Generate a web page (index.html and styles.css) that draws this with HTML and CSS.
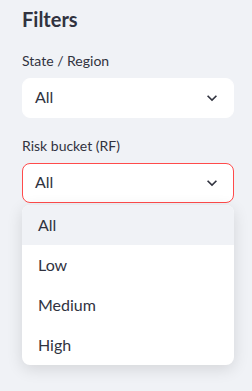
FILE: index.html
```html
<!DOCTYPE html>
<html>
<head>
<meta charset="utf-8">
<link rel="stylesheet" href="styles.css">
</head>
<body>
<aside class="sidebar">
  <h2 class="title">Filters</h2>
  <div class="field">
    <label class="label">State / Region</label>
    <div class="select">
      <span class="value">All</span>
      <svg class="chev" viewBox="0 0 24 24" width="20" height="20"><path d="M7.41 8.59L12 13.17l4.59-4.58L18 10l-6 6-6-6 1.41-1.41z" fill="#31333f"/></svg>
    </div>
  </div>
  <div class="field">
    <label class="label">Risk bucket (RF)</label>
    <div class="select-wrap">
      <div class="select focused">
        <span class="value">All</span>
        <svg class="chev" viewBox="0 0 24 24" width="20" height="20"><path d="M7.41 8.59L12 13.17l4.59-4.58L18 10l-6 6-6-6 1.41-1.41z" fill="#31333f"/></svg>
      </div>
      <ul class="menu">
        <li class="opt active">All</li>
        <li class="opt">Low</li>
        <li class="opt">Medium</li>
        <li class="opt">High</li>
      </ul>
    </div>
  </div>
</aside>
</body>
</html>
```
FILE: styles.css
```css
html, body {
  margin: 0;
  padding: 0;
  background: #f0f2f6;
  height: 100%;
}
body {
  font-family: Lato, "Open Sans", sans-serif;
  color: #31333f;
}
.sidebar {
  width: 212px;
  padding: 7px 18px 0 22px;
  display: flex;
  flex-direction: column;
}
.title {
  margin: 0;
  font-size: 20px;
  line-height: 24px;
  font-weight: 700;
  height: 24px;
}
.field {
  display: flex;
  flex-direction: column;
}
.field:first-of-type {
  margin-top: 19.5px;
}
.field + .field {
  margin-top: 17.5px;
}
.label {
  font-size: 14px;
  line-height: 20px;
  margin-bottom: 7.5px;
}
.select-wrap {
  position: relative;
}
.select {
  box-sizing: border-box;
  height: 40px;
  background: #fff;
  border: 1px solid #fff;
  border-radius: 8px;
  display: flex;
  align-items: center;
  justify-content: space-between;
  padding: 0 11px 0 12px;
}
.select.focused {
  border-color: #ff4b4b;
}
.value {
  font-size: 16px;
  line-height: 20px;
  margin-top: -2px;
}
.chev {
  display: block;
}
.menu {
  position: absolute;
  left: 0;
  right: 0;
  top: 42px;
  margin: 0;
  padding: 0;
  list-style: none;
  background: #fff;
  border-radius: 8px;
  overflow: hidden;
  box-shadow: 0 4px 16px rgba(0, 0, 0, 0.12);
}
.opt {
  box-sizing: border-box;
  height: 40px;
  display: flex;
  align-items: center;
  padding: 0 0 2px 16px;
  font-size: 16px;
}
.opt.active {
  background: #f0f2f6;
}
```
